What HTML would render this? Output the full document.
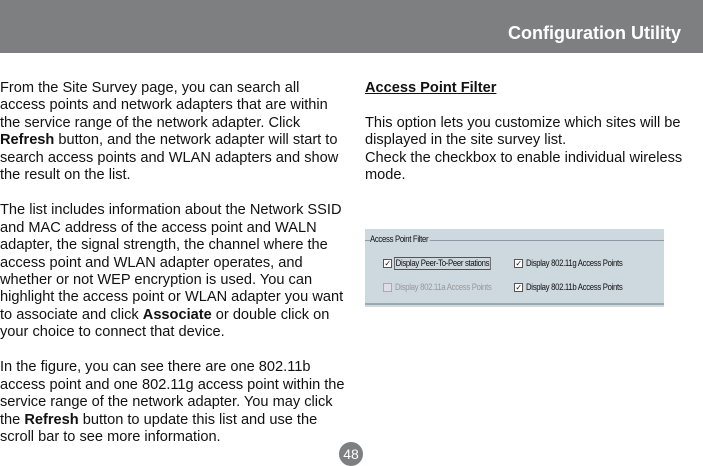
<html><head><style>
body{margin:0;width:703px;height:464px;overflow:hidden;background:#fff;font-family:"Liberation Sans",sans-serif;position:relative}
.hd{position:absolute;left:0;top:0;width:703px;height:53px;background:#7d7f81}
.hd span{position:absolute;right:22px;top:23px;color:#fff;font-weight:bold;font-size:18px}
.col{position:absolute;font-size:14.6px;line-height:17.45px;color:#111;white-space:nowrap}
.p{position:absolute;left:339px;top:442px;width:24px;height:24px;border-radius:50%;background:#7d7f81;color:#fff;font-size:14px;text-align:center;line-height:24px}
.shot{position:absolute;left:365px;top:229px;width:299px;height:78px;background:#cdd8df;font-size:9.5px;color:#111;letter-spacing:-0.4px}
.shot .b{position:absolute;top:11px;left:0;right:0;bottom:2px;border-top:1px solid #8a9aa5;border-bottom:2px solid #9aa8b0}
.cb{position:absolute;width:7px;height:7px;border:1px solid #555;background:#fff;font-size:8px;line-height:7px;text-align:center}
.t{position:absolute;transform:scaleX(0.82);transform-origin:0 50%;white-space:nowrap}
</style></head><body>
<div class="hd"><span>Configuration Utility</span></div>
<div class="col" style="left:0;top:80px">From the Site Survey page, you can search all<br>access points and network adapters that are within<br>the service range of the network adapter. Click<br><b>Refresh</b> button, and the network adapter will start to<br>search access points and WLAN adapters and show<br>the result on the list.<br><br>The list includes information about the Network SSID<br>and MAC address of the access point and WALN<br>adapter, the signal strength, the channel where the<br>access point and WLAN adapter operates, and<br>whether or not WEP encryption is used. You can<br>highlight the access point or WLAN adapter you want<br>to associate and click <b>Associate</b> or double click on<br>your choice to connect that device.<br><br>In the figure, you can see there are one 802.11b<br>access point and one 802.11g access point within the<br>service range of the network adapter. You may click<br>the <b>Refresh</b> button to update this list and use the<br>scroll bar to see more information.</div>
<div class="col" style="left:365px;top:80px"><b><u>Access Point Filter</u></b><br><br>This option lets you customize which sites will be<br>displayed in the site survey list.<br>Check the checkbox to enable individual wireless<br>mode.</div>
<div class="shot"><div class="b"></div>
<span class="t" style="left:5px;top:5px;background:#cdd8df;padding-right:2px">Access Point Filter</span>
<div class="cb" style="left:18px;top:30px">✓</div><span class="t" style="left:29px;top:28px;border:1px solid #555;padding:0 1px">Display Peer-To-Peer stations</span>
<div class="cb" style="left:18px;top:54px;border-color:#aaa;background:#dde"></div><span class="t" style="left:30px;top:53px;color:#999">Display 802.11a Access Points</span>
<div class="cb" style="left:149px;top:30px">✓</div><span class="t" style="left:161px;top:29px">Display 802.11g Access Points</span>
<div class="cb" style="left:149px;top:54px">✓</div><span class="t" style="left:161px;top:53px">Display 802.11b Access Points</span>
</div>
<div class="p">48</div>
</body></html>
